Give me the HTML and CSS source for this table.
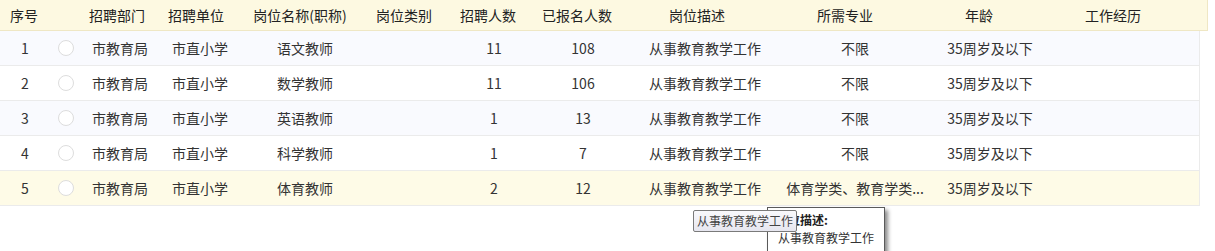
FILE: index.html
```html
<!DOCTYPE html>
<html lang="zh-CN">
<head>
<meta charset="utf-8">
<link rel="stylesheet" href="styles.css">
</head>
<body>
<div class="grid">
  <div class="head">
    <div class="hc">序号</div>
    <div class="hc"></div>
    <div class="hc">招聘部门</div>
    <div class="hc">招聘单位</div>
    <div class="hc">岗位名称(职称)</div>
    <div class="hc">岗位类别</div>
    <div class="hc">招聘人数</div>
    <div class="hc">已报名人数</div>
    <div class="hc">岗位描述</div>
    <div class="hc">所需专业</div>
    <div class="hc">年龄</div>
    <div class="hc">工作经历</div>
    <div class="hc"></div>
  </div>
  <div class="body">
    <div class="row alt">
      <div class="c">1</div><div class="c"><span class="radio"></span></div><div class="c">市教育局</div><div class="c">市直小学</div><div class="c">语文教师</div><div class="c"></div><div class="c">11</div><div class="c">108</div><div class="c">从事教育教学工作</div><div class="c">不限</div><div class="c">35周岁及以下</div><div class="c"></div>
    </div>
    <div class="row">
      <div class="c">2</div><div class="c"><span class="radio"></span></div><div class="c">市教育局</div><div class="c">市直小学</div><div class="c">数学教师</div><div class="c"></div><div class="c">11</div><div class="c">106</div><div class="c">从事教育教学工作</div><div class="c">不限</div><div class="c">35周岁及以下</div><div class="c"></div>
    </div>
    <div class="row alt">
      <div class="c">3</div><div class="c"><span class="radio"></span></div><div class="c">市教育局</div><div class="c">市直小学</div><div class="c">英语教师</div><div class="c"></div><div class="c">1</div><div class="c">13</div><div class="c">从事教育教学工作</div><div class="c">不限</div><div class="c">35周岁及以下</div><div class="c"></div>
    </div>
    <div class="row">
      <div class="c">4</div><div class="c"><span class="radio"></span></div><div class="c">市教育局</div><div class="c">市直小学</div><div class="c">科学教师</div><div class="c"></div><div class="c">1</div><div class="c">7</div><div class="c">从事教育教学工作</div><div class="c">不限</div><div class="c">35周岁及以下</div><div class="c"></div>
    </div>
    <div class="row hover">
      <div class="c">5</div><div class="c"><span class="radio"></span></div><div class="c">市教育局</div><div class="c">市直小学</div><div class="c">体育教师</div><div class="c"></div><div class="c">2</div><div class="c">12</div><div class="c">从事教育教学工作</div><div class="c">体育学类、教育学类...</div><div class="c">35周岁及以下</div><div class="c"></div>
    </div>
  </div>
</div>
<div class="popover">
  <div class="pop-title">岗位描述:</div>
  <div class="pop-text">从事教育教学工作</div>
</div>
<div class="tip">从事教育教学工作</div>
</body>
</html>
```
FILE: styles.css
```css
html, body {
  margin: 0;
  padding: 0;
  background: #ffffff;
}
body {
  font-family: "Noto Sans CJK SC", "Microsoft YaHei", sans-serif;
  font-size: 14px;
  color: #333333;
  width: 1215px;
  height: 251px;
  overflow: hidden;
  position: relative;
}
.grid {
  width: 1208px;
}
.head {
  display: grid;
  grid-template-columns: 48px 36px 66px 92px 116px 92px 76px 102px 138px 158px 110px 158px 15px;
  height: 30px;
  background: #fdf9e1;
  border-bottom: 1px solid #efe7c4;
  border-right: 1px solid #efe7c4;
  width: 1207px;
}
.hc {
  display: flex;
  align-items: center;
  justify-content: center;
  white-space: nowrap;
  color: #222222;
  line-height: 30px;
}
.body {
  width: 1200px;
  border-right: 1px solid #ebebeb;
  box-sizing: border-box;
}
.row {
  display: grid;
  grid-template-columns: 50px 32px 76px 84px 126px 82px 88px 90px 154px 146px 124px 147px;
  height: 34px;
  border-bottom: 1px solid #ebebeb;
  background: #ffffff;
}
.row.alt {
  background: #f9fafe;
}
.row.hover {
  background: #fefbe7;
}
.c {
  display: flex;
  align-items: center;
  justify-content: center;
  white-space: nowrap;
  color: #333333;
  min-width: 0;
}
.radio {
  width: 14px;
  height: 14px;
  border: 1px solid #dddddd;
  border-radius: 50%;
  background: #ffffff;
}
.popover {
  position: absolute;
  left: 767px;
  top: 207px;
  width: 104px;
  height: 42px;
  padding: 3px 6px 0;
  background: #ffffff;
  border: 1px solid #5a5a5a;
  border-bottom: none;
  box-shadow: 3px 3px 4px rgba(0, 0, 0, 0.45);
  font-size: 12px;
  line-height: 18px;
  color: #333333;
}
.pop-title {
  font-weight: bold;
  color: #222222;
  padding-left: 2px;
}
.pop-text {
  padding-left: 4px;
}
.tip {
  position: absolute;
  left: 693px;
  top: 210px;
  height: 20px;
  width: 102px;
  border: 1px solid #7a7a7a;
  border-radius: 2px;
  background: linear-gradient(#f9f9fc, #e6e6ef);
  font-size: 12px;
  line-height: 20px;
  text-align: center;
  color: #444444;
  white-space: nowrap;
}
```
